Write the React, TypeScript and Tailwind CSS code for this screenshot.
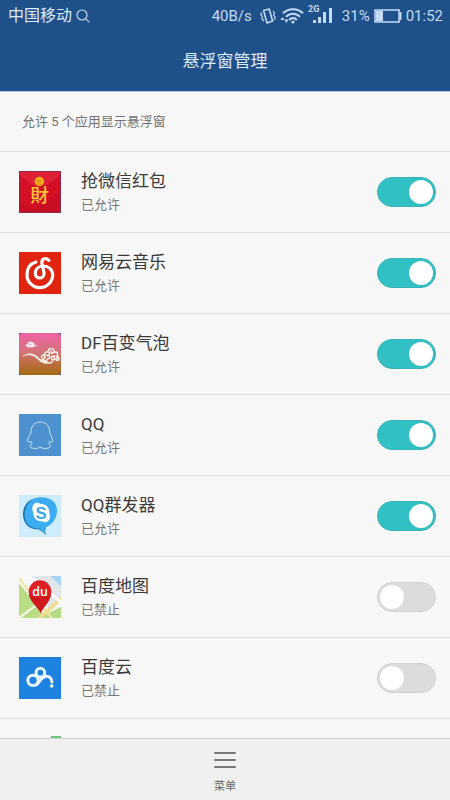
import { useState } from 'react'
import type { ReactNode } from 'react'

const iconClass = 'size-[42px] shrink-0'

function HongbaoIcon() {
  return (
    <svg viewBox="0 0 126 126" className={iconClass} aria-hidden="true">
      <rect width="126" height="126" fill="#8c2a4c" />
      <rect x="4" y="3" width="118" height="119" fill="#d40f26" />
      <path d="M4 3h118v14L84 42Q62 56 40 42L4 17Z" fill="#de1f35" />
      <path d="M4 17l36 25q22 14 44 0l38-25" fill="none" stroke="#bb0d24" strokeWidth="2" />
      <path d="M4 122V96q58 36 118-38v64Z" fill="#c80e23" />
      <circle cx="61" cy="31" r="14" fill="#f8b41c" />
      <text x="61" y="38" textAnchor="middle" fontSize="18" fill="#d9790c"
        className="font-['Noto_Sans_CJK_SC',sans-serif]">抢</text>
      <text x="62" y="93" textAnchor="middle" fontSize="56" fontWeight="500" fill="#f9c63a"
        className="font-['Noto_Sans_CJK_SC',sans-serif]">財</text>
    </svg>
  )
}

function NeteaseIcon() {
  return (
    <svg viewBox="0 0 126 126" className={iconClass} aria-hidden="true">
      <rect width="126" height="126" fill="#e02410" />
      <path d="M51 30C34 35 24 50 24 69a38.500 38 0 0 0 77 0C101 52 88 42 73 42C58 42 49 52 49 64c0 9 6 14 13 14s15-6 13-16L69 36C66 20 79 15 90 25"
        fill="none" stroke="#fff" strokeWidth="9.5" strokeLinecap="round" strokeLinejoin="round" />
    </svg>
  )
}

function BubbleIcon() {
  return (
    <svg viewBox="0 0 126 126" className={iconClass} aria-hidden="true">
      <defs>
        <linearGradient id="dusk" x1="0" y1="0" x2="0" y2="1">
          <stop offset="0" stopColor="#ee62a6" />
          <stop offset="0.45" stopColor="#d5727a" />
          <stop offset="0.75" stopColor="#b96c3c" />
          <stop offset="1" stopColor="#a26c12" />
        </linearGradient>
      </defs>
      <rect width="126" height="126" fill="#6d5a80" />
      <rect width="126" height="126" rx="13" fill="url(#dusk)" />
      <path d="M17 38c2-4 7-3 8-5c1-7 9-10 14-6c6 0 8 5 7 8c4 0 7 2 11 4c-5 1-8 1-11 1c-3 5-10 5-13 2c-5 3-12 1-10-4c-2-1-4-1-6 0Z" fill="#fbe9ee" />
      <path d="M30 36c2-4 8-4 9 0" fill="none" stroke="#e07c9c" strokeWidth="2" />
      <path d="M12 70C28 56 48 62 62 77C70 84 82 84 86 76C86 88 72 94 60 82C46 66 30 60 12 70Z" fill="#fff3ea" stroke="#fff3ea" strokeWidth="1.500" strokeLinejoin="round" />
      <g fill="none" stroke="#fff3ea" strokeWidth="4.500" strokeLinecap="round">
        <path d="M70 80c8-2 10-8 6-12c-5-4-11 2-7 6" />
        <path d="M76 66c-1-8 10-13 15-6c3 7-7 11-9 5" />
        <path d="M88 53c2-9 18-8 17 2c-2 8-12 5-9-1" />
        <path d="M106 58c8-3 13 6 8 12" />
        <path d="M114 70c9 3 7 14 0 12c-6-2-2-9 2-6" />
        <path d="M108 70c-8-4-14 4-9 9c5 4 10-2 6-5" />
        <path d="M84 86c5 6 14 5 16-1M72 86c5 5 10 5 15 3M90 68c4 2 3 8-2 9" />
      </g>
    </svg>
  )
}

function QQIcon() {
  return (
    <svg viewBox="0 0 126 126" className={iconClass} aria-hidden="true">
      <rect width="126" height="126" fill="#4d92cf" />
      <path d="M64 24C46 24 36 38 36 54C36 60 29 66 26 78C25 86 30 87 35 81C36 84 37 86 39 89C33 92 32 98 36 101C46 105 58 104 63 99C70 104 82 105 91 101C96 98 95 92 89 89C91 86 92 84 93 81C98 87 102 86 101 78C98 66 92 60 92 54C92 38 82 24 64 24Z"
        fill="none" stroke="#c3e8fc" strokeWidth="3" strokeLinejoin="round" />
    </svg>
  )
}

function SenderIcon() {
  return (
    <svg viewBox="0 0 126 126" className={iconClass} aria-hidden="true">
      <rect width="126" height="126" fill="#cfecfb" />
      <path d="M60 8C28 10 11 32 12 60c1 26 18 42 41 43c9 0 14 6 29 16c-5-8-4-14-2-20Z" fill="#1d74ad" />
      <path d="M66 7c32 0 49 17 48 42c-1 23-16 43-36 49c-2 7-1 12 4 20c-11-6-18-17-29-18C31 98 17 83 17 59C17 30 38 7 66 7Z" fill="#3badf0" />
      <path d="M48 25c7-3 12-1 16 2c16-1 28 10 27 27c4 8 3 19-4 24c-6 5-13 4-18 1c-15 1-26-10-26-26c-5-9-4-22 5-28Z" fill="#fff" />
      <text x="66" y="71" textAnchor="middle" fontSize="50" fontWeight="700" fill="#38a5e6"
        className="font-['Liberation_Sans',sans-serif]">S</text>
    </svg>
  )
}

function MapIcon() {
  return (
    <svg viewBox="0 0 126 126" className={iconClass} aria-hidden="true">
      <rect width="126" height="126" fill="#f7f9f8" />
      <path d="M0 22L84 126H0Z" fill="#b9dd84" />
      <path d="M34 0h60l32 34v44L92 104Z" fill="#e2e6ea" />
      <path d="M94 0h32v32Z" fill="#a5d6f6" />
      <path d="M126 92v34H58Z" fill="#b4dd86" />
      <path d="M0 8l98 118" fill="none" stroke="#f3e6a0" strokeWidth="7" />
      <path d="M128 66L60 128" fill="none" stroke="#f1dc8e" strokeWidth="11" />
      <path d="M0 126l54-40" fill="none" stroke="#f5f5e6" strokeWidth="7" />
      <path d="M24-4l104 84" fill="none" stroke="#fff" strokeWidth="8" />
      <path d="M65 111C58 92 29 76 29 47a34 34 0 0 1 68 0C97 76 72 92 65 111Z" fill="#df1f26" />
      <path d="M65 111C58 92 34 80 30 54c14 14 52 14 66 0C92 80 72 92 65 111Z" fill="#d0181f" />
      <text x="63" y="59" textAnchor="middle" fontSize="37" fontWeight="600" fill="#fff"
        className="font-['Open_Sans',sans-serif]">du</text>
    </svg>
  )
}

function CloudIcon() {
  return (
    <svg viewBox="0 0 126 126" className={iconClass} aria-hidden="true">
      <rect width="126" height="126" fill="#1d82e0" />
      <g fill="none" stroke="#e9f5ff" strokeWidth="9">
        <circle cx="42" cy="70" r="15.5" />
        <circle cx="64" cy="47" r="13" />
        <path d="M52 83C62 77 66 60 82 58c10-1 17 8 17 17" strokeLinecap="round" />
      </g>
      <circle cx="98" cy="87" r="5.5" fill="#e9f5ff" />
    </svg>
  )
}

function StatusBar() {
  return (
    <div className="flex h-8 items-center pl-2 pr-[7px] text-[15px] leading-5 text-[#c3dcf7]">
      <span className="text-base leading-5 text-[#dcecff]">中国移动</span>
      <svg viewBox="0 0 14 14" className="ml-1 size-[14px]" fill="none" stroke="currentColor" strokeWidth="1.2" aria-hidden="true">
        <circle cx="6" cy="6" r="5" />
        <path d="M9.6 9.6L13.4 13.4" />
      </svg>
      <span className="ml-auto">40B/s</span>
      <svg viewBox="0 0 16 16" className="ml-2 size-4" fill="none" stroke="currentColor" strokeWidth="1.2" aria-hidden="true">
        <path d="M3.6 2.6L9.2 1L12.6 13L7 15Z" strokeWidth="1.6" strokeLinejoin="round" />
        <path d="M1.8 4.5L.6 6.400L2.400 8.400L1.800 10.500L4 13M13 2.800L14.400 5L13.600 7.200L15.200 9.400L14.400 12" />
      </svg>
      <svg viewBox="0 0 24 16" className="ml-1 h-4 w-6" fill="none" stroke="currentColor" strokeWidth="2" aria-hidden="true">
        <path d="M3 5.4C8-.2 18-.2 23 5.4M6 8.8C9.6 4.6 16.4 4.6 20 8.8M9.2 12C11.4 9.4 14.6 9.4 16.8 12" />
        <circle cx="13" cy="14" r="1.6" fill="currentColor" stroke="none" />
        <path d="M.4 12h4L2.4 9ZM4.4 11.4h4L6.4 15Z" fill="currentColor" stroke="none" />
      </svg>
      <svg viewBox="0 0 26 32" className="ml-1 h-8 w-[26px]" fill="currentColor" aria-hidden="true">
        <text x="0" y="12" fontSize="9" fontWeight="700">2G</text>
        <path d="M5 20h3v3H5zM10 17h3v6h-3zM15 12h3v11h-3zM21 8h3v15h-3z" />
      </svg>
      <span className="ml-2">31%</span>
      <svg viewBox="0 0 28 14" className="ml-1 h-[14px] w-7" fill="none" stroke="currentColor" aria-hidden="true">
        <path d="M1 1h24v12H1z" strokeWidth="1.5" />
        <path d="M2 2h7v10H2z" fill="currentColor" stroke="none" />
        <path d="M26.5 3v8" strokeWidth="2" />
      </svg>
      <span className="ml-1">01:52</span>
    </div>
  )
}

type AppItem = { id: string; name: string; icon: ReactNode; allowed: boolean }

const initialApps: AppItem[] = [
  { id: 'hongbao', name: '抢微信红包', icon: <HongbaoIcon />, allowed: true },
  { id: 'netease', name: '网易云音乐', icon: <NeteaseIcon />, allowed: true },
  { id: 'bubble', name: 'DF百变气泡', icon: <BubbleIcon />, allowed: true },
  { id: 'qq', name: 'QQ', icon: <QQIcon />, allowed: true },
  { id: 'sender', name: 'QQ群发器', icon: <SenderIcon />, allowed: true },
  { id: 'map', name: '百度地图', icon: <MapIcon />, allowed: false },
  { id: 'cloud', name: '百度云', icon: <CloudIcon />, allowed: false },
]

export default function App() {
  const [apps, setApps] = useState(initialApps)
  const count = apps.filter(a => a.allowed).length

  function toggle(id: string) {
    setApps(apps.map(a => (a.id === id ? { ...a, allowed: !a.allowed } : a)))
  }

  return (
    <div className="flex h-screen flex-col bg-[#f7f7f7] font-[Roboto,'Noto_Sans_CJK_SC',sans-serif]">
      <header className="shrink-0 border-b border-[#a9c8e6] bg-[#1f5089]">
        <StatusBar />
        <h1 className="flex h-[59px] items-center justify-center text-[17px] text-[#dcecff]">
          悬浮窗管理
        </h1>
      </header>

      <main className="min-h-0 flex-1 overflow-hidden">
        <p className="flex h-[60px] items-center border-b border-[#dcdcdc] pl-[22px] text-[13px] text-[#737373]">
          允许 {count} 个应用显示悬浮窗
        </p>
        <ul>
          {apps.map(a => (
            <li key={a.id} className="flex h-[81px] items-center border-b border-[#dcdcdc] pl-[19px] pr-[14px]">
              {a.icon}
              <label htmlFor={a.id} className="ml-5 min-w-0 flex-1 pt-0.5">
                <span className="block truncate text-[17px] leading-6 text-[#3a3a3a]">{a.name}</span>
                <span className="block text-[13px] leading-6 text-[#777777]">
                  {a.allowed ? '已允许' : '已禁止'}
                </span>
              </label>
              <input
                id={a.id}
                type="checkbox"
                role="switch"
                checked={a.allowed}
                onChange={() => toggle(a.id)}
                className="flex h-[30px] w-[59px] shrink-0 cursor-pointer appearance-none items-center rounded-full
                  border border-[#d0d0d0] bg-[#dcdcdc] px-0.5 transition-colors
                  before:block before:size-6 before:rounded-full before:bg-white before:content-['']
                  checked:border-[#38b3b5] checked:bg-[#31c0c3] checked:before:translate-x-[29px]"
              />
            </li>
          ))}
          <li className="pl-[19px] pt-[17px]">
            <svg viewBox="0 0 42 42" className={iconClass} aria-hidden="true">
              <rect x="32" width="10" height="42" fill="#6cc97a" />
            </svg>
          </li>
        </ul>
      </main>

      <footer className="shrink-0 border-t border-[#d2d2d2] bg-[#f0f0f0]">
        <button type="button" className="mx-auto flex h-[61px] flex-col items-center px-6 pt-3">
          <svg viewBox="0 0 22 18" className="h-[18px] w-[22px]" stroke="#777777" strokeWidth="2" strokeLinecap="round" aria-hidden="true">
            <path d="M1 2h20M1 9h20M1 16h20" />
          </svg>
          <span className="mt-2.5 text-[11px] leading-4 text-[#666666]">菜单</span>
        </button>
      </footer>
    </div>
  )
}
